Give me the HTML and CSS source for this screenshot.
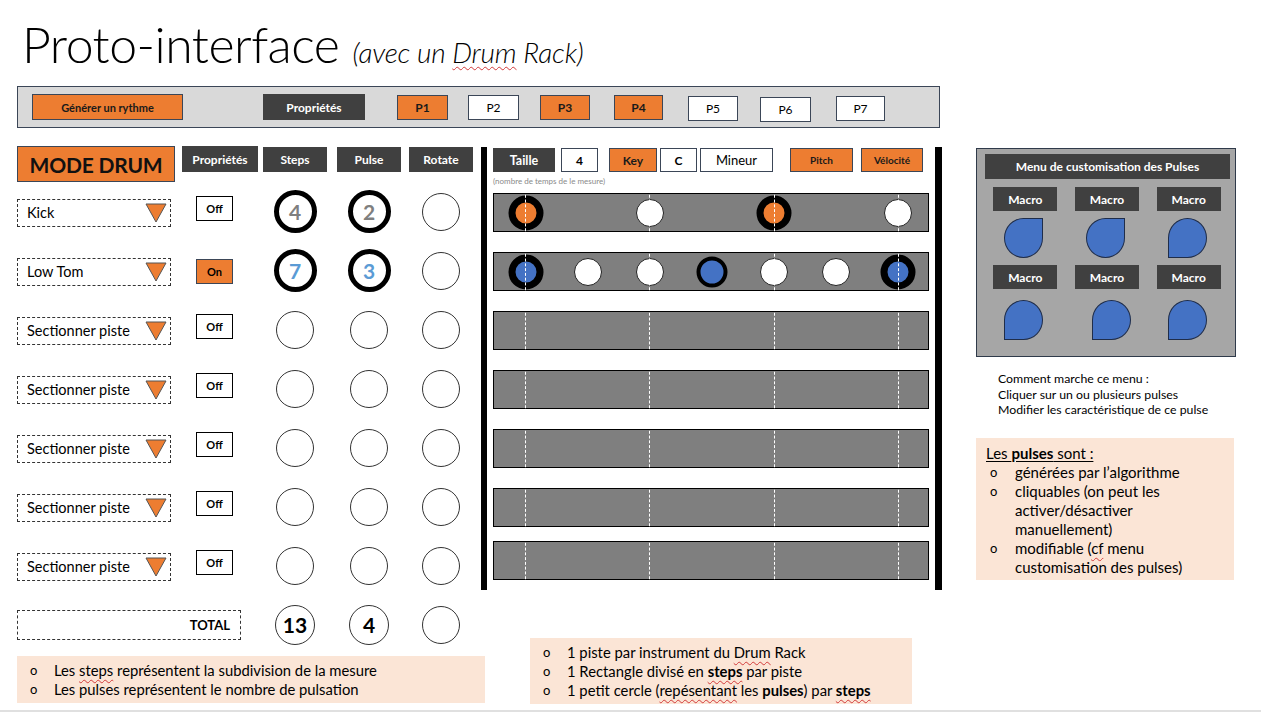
FILE: index.html
```html
<!DOCTYPE html>
<html lang="fr">
<head>
<meta charset="utf-8">
<title>Proto-interface</title>
<link rel="stylesheet" href="styles.css">
</head>
<body>
<div class="page">
  <h1 class="title">Proto-interface <span class="subtitle">(avec un <span class="squiggle">Drum</span> Rack)</span></h1>

  <div class="topbar">
    <div class="btn orange gen">Générer un rythme</div>
    <div class="btn dark props">Propriétés</div>
    <div class="btn orange pb p1">P1</div>
    <div class="btn white pb p2 thin">P2</div>
    <div class="btn orange pb p3">P3</div>
    <div class="btn orange pb p4">P4</div>
    <div class="btn white pb p5 thin low">P5</div>
    <div class="btn white pb p6 thin lower">P6</div>
    <div class="btn white pb p7 thin low">P7</div>
  </div>

  <div class="main">
    <div class="left">
      <div class="lrow head">
        <div class="c1"><div class="mode">MODE DRUM</div></div>
        <div class="c2"><div class="hlabel hprops">Propriétés</div></div>
        <div class="c3"><div class="hlabel">Steps</div></div>
        <div class="c4"><div class="hlabel">Pulse</div></div>
        <div class="c5"><div class="hlabel">Rotate</div></div>
      </div>

      <div class="lrow">
        <div class="c1"><div class="select">Kick<svg class="tri" width="22" height="20" viewBox="0 0 22 20"><polygon points="1,1 21,1 11,19" fill="#ed7d31" stroke="#555" stroke-width="1"/></svg></div></div>
        <div class="c2"><div class="toggle">Off</div></div>
        <div class="c3"><div class="cc"><div class="knob thick grey">4</div></div></div>
        <div class="c4"><div class="cc"><div class="knob thick grey">2</div></div></div>
        <div class="c5"><div class="cc"><div class="knob"></div></div></div>
      </div>

      <div class="lrow">
        <div class="c1"><div class="select">Low Tom<svg class="tri" width="22" height="20" viewBox="0 0 22 20"><polygon points="1,1 21,1 11,19" fill="#ed7d31" stroke="#555" stroke-width="1"/></svg></div></div>
        <div class="c2"><div class="toggle on">On</div></div>
        <div class="c3"><div class="cc"><div class="knob thick blue">7</div></div></div>
        <div class="c4"><div class="cc"><div class="knob thick blue">3</div></div></div>
        <div class="c5"><div class="cc"><div class="knob"></div></div></div>
      </div>

      <div class="lrow">
        <div class="c1"><div class="select">Sectionner piste<svg class="tri" width="22" height="20" viewBox="0 0 22 20"><polygon points="1,1 21,1 11,19" fill="#ed7d31" stroke="#555" stroke-width="1"/></svg></div></div>
        <div class="c2"><div class="toggle">Off</div></div>
        <div class="c3"><div class="cc"><div class="knob"></div></div></div>
        <div class="c4"><div class="cc"><div class="knob"></div></div></div>
        <div class="c5"><div class="cc"><div class="knob"></div></div></div>
      </div>

      <div class="lrow">
        <div class="c1"><div class="select">Sectionner piste<svg class="tri" width="22" height="20" viewBox="0 0 22 20"><polygon points="1,1 21,1 11,19" fill="#ed7d31" stroke="#555" stroke-width="1"/></svg></div></div>
        <div class="c2"><div class="toggle">Off</div></div>
        <div class="c3"><div class="cc"><div class="knob"></div></div></div>
        <div class="c4"><div class="cc"><div class="knob"></div></div></div>
        <div class="c5"><div class="cc"><div class="knob"></div></div></div>
      </div>

      <div class="lrow">
        <div class="c1"><div class="select">Sectionner piste<svg class="tri" width="22" height="20" viewBox="0 0 22 20"><polygon points="1,1 21,1 11,19" fill="#ed7d31" stroke="#555" stroke-width="1"/></svg></div></div>
        <div class="c2"><div class="toggle">Off</div></div>
        <div class="c3"><div class="cc"><div class="knob"></div></div></div>
        <div class="c4"><div class="cc"><div class="knob"></div></div></div>
        <div class="c5"><div class="cc"><div class="knob"></div></div></div>
      </div>

      <div class="lrow">
        <div class="c1"><div class="select">Sectionner piste<svg class="tri" width="22" height="20" viewBox="0 0 22 20"><polygon points="1,1 21,1 11,19" fill="#ed7d31" stroke="#555" stroke-width="1"/></svg></div></div>
        <div class="c2"><div class="toggle">Off</div></div>
        <div class="c3"><div class="cc"><div class="knob"></div></div></div>
        <div class="c4"><div class="cc"><div class="knob"></div></div></div>
        <div class="c5"><div class="cc"><div class="knob"></div></div></div>
      </div>

      <div class="lrow">
        <div class="c1"><div class="select">Sectionner piste<svg class="tri" width="22" height="20" viewBox="0 0 22 20"><polygon points="1,1 21,1 11,19" fill="#ed7d31" stroke="#555" stroke-width="1"/></svg></div></div>
        <div class="c2"><div class="toggle">Off</div></div>
        <div class="c3"><div class="cc"><div class="knob"></div></div></div>
        <div class="c4"><div class="cc"><div class="knob"></div></div></div>
        <div class="c5"><div class="cc"><div class="knob"></div></div></div>
      </div>

      <div class="lrow">
        <div class="ctotal"><div class="total">TOTAL</div></div>
        <div class="c3"><div class="cc"><div class="knob tot">13</div></div></div>
        <div class="c4"><div class="cc"><div class="knob tot">4</div></div></div>
        <div class="c5"><div class="cc"><div class="knob"></div></div></div>
      </div>

      <ul class="note note-left">
        <li>Les <span class="squiggle">steps</span> représentent la subdivision de la mesure</li>
        <li>Les pulses représentent le nombre de pulsation</li>
      </ul>
    </div>

    <div class="mid">
      <div class="tracks">
        <div class="toolbar">
          <div class="btn dark tb-taille">Taille</div>
          <div class="btn white tb-4">4</div>
          <div class="btn orange tb-key">Key</div>
          <div class="btn white tb-c">C</div>
          <div class="btn white tb-mineur">Mineur</div>
          <div class="btn orange tb-pitch">Pitch</div>
          <div class="btn orange tb-velo">Vélocité</div>
        </div>
        <div class="caption">(nombre de temps de le mesure)</div>

        <div class="track">
          <div class="step beat"><span class="dot ring-o"></span></div>
          <div class="step beat"><span class="dot wh"></span></div>
          <div class="step beat"><span class="dot ring-o"></span></div>
          <div class="step beat"><span class="dot wh"></span></div>
        </div>
        <div class="track">
          <div class="step beat"><span class="dot ring-b"></span></div>
          <div class="step"><span class="dot wh"></span></div>
          <div class="step beat"><span class="dot wh"></span></div>
          <div class="step"><span class="dot mid-b"></span></div>
          <div class="step beat"><span class="dot wh"></span></div>
          <div class="step"><span class="dot wh"></span></div>
          <div class="step beat"><span class="dot ring-b"></span></div>
        </div>
        <div class="track">
          <div class="step beat"></div><div class="step beat"></div><div class="step beat"></div><div class="step beat"></div>
        </div>
        <div class="track">
          <div class="step beat"></div><div class="step beat"></div><div class="step beat"></div><div class="step beat"></div>
        </div>
        <div class="track">
          <div class="step beat"></div><div class="step beat"></div><div class="step beat"></div><div class="step beat"></div>
        </div>
        <div class="track">
          <div class="step beat"></div><div class="step beat"></div><div class="step beat"></div><div class="step beat"></div>
        </div>
        <div class="track tight">
          <div class="step beat"></div><div class="step beat"></div><div class="step beat"></div><div class="step beat"></div>
        </div>
      </div>

      <ul class="note note-mid">
        <li>1 piste par instrument du <span class="squiggle">Drum</span> Rack</li>
        <li>1 Rectangle divisé en <b class="squiggle">steps</b> par piste</li>
        <li>1 petit cercle (<span class="squiggle">repésentant</span> les <b>pulses</b>) par <b class="squiggle">steps</b></li>
      </ul>
    </div>

    <div class="right">
      <div class="panel">
        <div class="panel-head">Menu de customisation des Pulses</div>
        <div class="macros">
          <div class="macro">Macro</div>
          <div class="macro">Macro</div>
          <div class="macro">Macro</div>
          <div class="drop-cell"><span class="drop tr"></span></div>
          <div class="drop-cell"><span class="drop tr"></span></div>
          <div class="drop-cell"><span class="drop bl"></span></div>
          <div class="macro">Macro</div>
          <div class="macro">Macro</div>
          <div class="macro">Macro</div>
          <div class="drop-cell r2"><span class="drop bl"></span></div>
          <div class="drop-cell r2"><span class="drop bl shift"></span></div>
          <div class="drop-cell r2"><span class="drop bl"></span></div>
        </div>
      </div>
      <p class="howto">Comment marche ce menu :<br>Cliquer sur un ou plusieurs pulses<br>Modifier les caractéristique de ce pulse</p>
      <div class="note-right">
        <p class="nr-title">Les <b>pulses</b> sont :</p>
        <ul class="nr-list">
          <li>générées par l’algorithme</li>
          <li>cliquables (on peut les activer/désactiver manuellement)</li>
          <li>modifiable (<span class="squiggle">cf</span> menu customisation des pulses)</li>
        </ul>
      </div>
    </div>
  </div>
</div>
</body>
</html>
```

FILE: styles.css
```css
* { box-sizing: border-box; margin: 0; padding: 0; }

body {
  margin: 0;
  width: 1261px;
  height: 712px;
  overflow: hidden;
  background: #fff;
  color: #000;
  font-family: "Lato", "Open Sans", sans-serif;
}

.page {
  height: 712px;
  border-bottom: 2px solid #e0e0e0;
}

.title {
  height: 86px;
  padding: 14px 0 0 22px;
  font-size: 50px;
  font-weight: 300;
  line-height: 60px;
  white-space: nowrap;
  letter-spacing: -0.5px;
}

.subtitle {
  font-size: 28px;
  font-style: italic;
  font-weight: 300;
  margin-left: 0;
  letter-spacing: -0.2px;
}

.squiggle {
  text-decoration: underline wavy #d23a3a;
  text-decoration-thickness: 1px;
  text-underline-offset: 3px;
}

/* generic buttons */
.btn {
  height: 26px;
  display: flex;
  align-items: center;
  justify-content: center;
  font-size: 12px;
  font-weight: 700;
  border: 1px solid #3b4657;
  flex: none;
}
.orange { background: #ed7d31; color: #1a1a1a; }
.dark { background: #404040; color: #fff; border-color: #404040; }
.white { background: #fff; color: #000; }
.thin { font-weight: 400; }

/* top bar */
.topbar {
  margin-left: 17px;
  width: 923px;
  height: 42px;
  background: #d9d9d9;
  border: 1px solid #3b4657;
  display: flex;
  align-items: center;
}
.gen { width: 151px; margin-left: 14px; font-size: 11px; }
.props { width: 102px; margin-left: 80px; }
.pb { width: 51px; height: 25px; }
.p1 { margin-left: 32px; }
.p2 { margin-left: 20px; }
.p3 { margin-left: 21px; width: 50px; }
.p4 { margin-left: 24px; width: 49px; }
.p5 { margin-left: 25px; width: 50px; }
.p6 { margin-left: 22px; width: 51px; }
.p7 { margin-left: 25px; width: 49px; }
.low { margin-top: 2px; }
.lower { margin-top: 4px; }

/* main */
.main {
  display: flex;
  margin-top: 18px;
  padding-left: 17px;
}

.left { width: 464px; flex: none; }

.lrow {
  display: flex;
  align-items: center;
  height: 59px;
}
.lrow.head { height: 36px; align-items: flex-start; }

.c1 { width: 165px; flex: none; }
.c2 { width: 81px; flex: none; }
.c3 { width: 74px; flex: none; }
.c4 { width: 72px; flex: none; }
.c5 { width: 64px; flex: none; }
.ctotal { width: 246px; flex: none; }
.cc { width: 64px; display: flex; justify-content: center; }

.mode {
  width: 158px;
  height: 36px;
  background: #ed7d31;
  border: 1px solid #3b4657;
  font-size: 21px;
  font-weight: 700;
  display: flex;
  align-items: center;
  justify-content: center;
  color: #111;
  letter-spacing: -0.2px;
}

.hlabel {
  width: 64px;
  height: 25px;
  margin-top: 1px;
  background: #404040;
  color: #fff;
  font-size: 12px;
  font-weight: 700;
  display: flex;
  align-items: center;
  justify-content: center;
}
.hprops { width: 76px; margin-top: 0; height: 26px; }

.select {
  width: 154px;
  height: 28px;
  border: 1px dashed #333;
  display: flex;
  align-items: center;
  justify-content: space-between;
  padding: 0 3px 0 9px;
  font-size: 14.5px;
  margin-top: 2px;
}
.tri { display: block; }

.toggle {
  width: 37px;
  height: 25px;
  margin-left: 14px;
  margin-bottom: 6px;
  border: 1px solid #000;
  background: #fff;
  font-size: 11px;
  font-weight: 700;
  display: flex;
  align-items: center;
  justify-content: center;
}
.toggle.on { background: #ed7d31; border-color: #3b4657; margin-bottom: 0; margin-top: 2px; }

.knob {
  width: 38px;
  height: 38px;
  border-radius: 50%;
  border: 1px solid #333;
  display: flex;
  align-items: center;
  justify-content: center;
  font-weight: 700;
  flex: none;
}
.knob.thick {
  width: 43px;
  height: 43px;
  border: 5px solid #000;
  font-size: 21px;
}
.knob.grey { color: #7f7f7f; }
.knob.blue { color: #5b9bd5; }
.knob.tot { width: 40px; height: 40px; font-size: 21px; }

.total {
  width: 224px;
  height: 30px;
  border: 1px dashed #333;
  display: flex;
  align-items: center;
  justify-content: flex-end;
  padding-right: 10px;
  font-size: 13px;
  font-weight: 700;
}

/* notes */
.note {
  list-style: none;
  background: #fbe5d6;
  font-size: 14.8px;
  line-height: 19px;
}
.note li { position: relative; padding-left: 24px; white-space: nowrap; }
.note li::before {
  content: "o";
  position: absolute;
  left: 0;
  top: 0;
  font-size: 13px;
}
.note-left {
  width: 468px;
  height: 47px;
  margin-top: 2px;
  padding: 5px 0 0 13px;
}

/* middle */
.mid { width: 461px; flex: none; padding-top: 1px; }

.tracks {
  height: 443px;
  border-left: 6px solid #000;
  border-right: 7px solid #000;
  padding: 1px 6px 0 6px;
}

.toolbar { display: flex; align-items: center; height: 24px; }
.toolbar .btn { height: 24px; }
.tb-taille { width: 62px; font-size: 12.5px; }
.tb-4 { width: 37px; margin-left: 6px; font-size: 12px; }
.tb-key { width: 48px; margin-left: 11px; font-size: 12px; }
.tb-c { width: 37px; margin-left: 3px; font-size: 12px; }
.tb-mineur { width: 73px; margin-left: 3px; font-size: 13px; font-weight: 400; }
.tb-pitch { width: 63px; margin-left: 17px; font-size: 10px; }
.tb-velo { width: 62px; margin-left: 8px; font-size: 10px; }

.caption {
  font-size: 8px;
  color: #8a8a8a;
  line-height: 12px;
  margin-top: 3px;
  height: 18px;
}

.track {
  width: 436px;
  height: 39px;
  background: #7f7f7f;
  border: 1px solid #000;
  display: flex;
  justify-content: space-between;
  padding: 0 30px 0 31px;
}
.track + .track { margin-top: 20px; }
.track.tight { margin-top: 14px; }

.step { width: 0; position: relative; }
.step.beat::after {
  content: "";
  position: absolute;
  left: 0;
  top: -4px;
  bottom: -5px;
  border-left: 1px dashed #fff;
  z-index: 2;
}
.dot {
  position: absolute;
  left: 0.5px;
  top: 50%;
  transform: translate(-50%, -50%);
  border-radius: 50%;
  z-index: 1;
}
.dot.wh { width: 28px; height: 28px; background: #fff; border: 1px solid #222; }
.dot.ring-o { width: 35px; height: 35px; background: #ed7d31; border: 7px solid #000; }
.dot.ring-b { width: 35px; height: 35px; background: #4472c4; border: 7px solid #000; }
.dot.mid-b { width: 31px; height: 31px; background: #4472c4; border: 4px solid #000; }

.note-mid {
  width: 382px;
  height: 66px;
  margin: 48px 0 0 49px;
  padding: 5px 0 0 13px;
}

/* right */
.right { width: 260px; flex: none; margin-left: 34px; padding-top: 2px; }

.panel {
  width: 260px;
  height: 209px;
  background: #a6a6a6;
  border: 1px solid #2f3a4a;
  padding: 5px 5px 0 8px;
}
.panel-head {
  height: 25px;
  background: #404040;
  color: #fff;
  font-size: 12px;
  font-weight: 700;
  display: flex;
  align-items: center;
  justify-content: center;
}
.macros {
  display: grid;
  grid-template-columns: repeat(3, 1fr);
  margin-top: 8px;
  justify-items: center;
}
.macro {
  width: 64px;
  height: 24px;
  background: #404040;
  color: #fff;
  font-size: 12px;
  font-weight: 700;
  display: flex;
  align-items: center;
  justify-content: center;
  margin-left: -1px;
}
.drop-cell {
  height: 54px;
  display: flex;
  align-items: center;
  justify-content: center;
  margin-right: 4px;
}
.drop-cell.r2 { height: 58px; padding-top: 4px; }
.drop {
  width: 39px;
  height: 40px;
  background: #4472c4;
  border: 1px solid #1f2d4a;
}
.drop.tr { border-radius: 50% 0 50% 50%; }
.drop.bl { border-radius: 50% 50% 50% 0; }
.drop.shift { margin-left: 12px; }

.howto {
  font-size: 12.3px;
  line-height: 15.5px;
  margin: 14px 0 0 22px;
}

.note-right {
  width: 258px;
  height: 142px;
  margin-top: 20px;
  background: #fbe5d6;
  padding: 6px 44px 0 10px;
  font-size: 15px;
  line-height: 19px;
}
.nr-title { text-decoration: underline; text-underline-offset: 2px; }
.nr-list { list-style: none; }
.nr-list li { padding-left: 29px; position: relative; }
.nr-list li::before {
  content: "o";
  position: absolute;
  left: 4px;
  top: 0;
  font-size: 13px;
}
```
